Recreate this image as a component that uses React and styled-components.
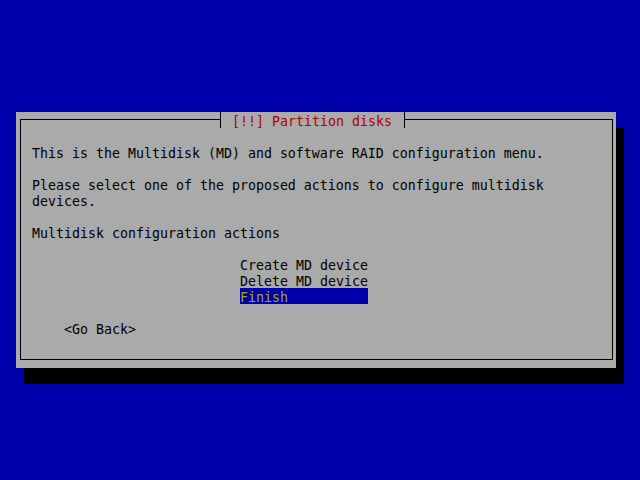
import React from "react";
import styled, { createGlobalStyle } from "styled-components";

const GlobalStyle = createGlobalStyle`
    html, body {
        margin: 0;
        padding: 0;
        background: #0000aa;
    }
`;

const menuItems = ["Create MD device", "Delete MD device", "Finish"];

const App = () => {
    const selected = 2;

    return (
        <Screen>
            <GlobalStyle />
            <Dialog>
                <Frame>
                    <Title>[!!] Partition disks</Title>
                    <Text>This is the Multidisk (MD) and software RAID configuration menu.</Text>
                    <Text>
                        Please select one of the proposed actions to configure multidisk
                        <br />
                        devices.
                    </Text>
                    <Text>Multidisk configuration actions</Text>
                    <Menu>
                        {menuItems.map((item, i) => (
                            <MenuItem key={item} $active={i === selected}>
                                {item}
                            </MenuItem>
                        ))}
                    </Menu>
                    <BackButton>&lt;Go Back&gt;</BackButton>
                </Frame>
            </Dialog>
        </Screen>
    );
};

export default App;

// every text cell is 8x16, glyphs sit 2px lower than css line boxes put them
const Screen = styled.div`
    width: 640px;
    height: 480px;
    box-sizing: border-box;
    padding: 112px 0 0 16px;
    background: #0000aa;
    font-family: "DejaVu Sans Mono", "Liberation Mono", monospace;
    font-size: 13.29px;
    line-height: 16px;
    color: #000;
`;

const Dialog = styled.div`
    width: 600px;
    height: 256px;
    box-sizing: border-box;
    padding: 7px 3px 8px 4px;
    background: #aaaaaa;
    box-shadow: 8px 16px 0 #000;
`;

const Frame = styled.div`
    position: relative;
    height: 100%;
    box-sizing: border-box;
    border: 1px solid #000;
    padding: 24px 0 0 11px;
`;

const Title = styled.div`
    position: absolute;
    top: -8px;
    left: 199px;
    height: 16px;
    box-sizing: border-box;
    padding: 2px 12px 0 11px;
    background: #aaaaaa;
    border-left: 1px solid #000;
    border-right: 1px solid #000;
    color: #aa0000;
    white-space: pre;
`;

const Text = styled.p`
    margin: 0 0 14px;
    padding-top: 2px;
    white-space: pre;
`;

const Menu = styled.div`
    display: flex;
    flex-direction: column;
    width: 128px;
    margin: 0 0 16px 208px;
`;

const MenuItem = styled.div`
    height: 16px;
    box-sizing: border-box;
    padding-top: 2px;
    white-space: pre;
    background: ${(p) => (p.$active ? "#0000aa" : "transparent")};
    color: ${(p) => (p.$active ? "#aaaa00" : "#000")};
`;

const BackButton = styled.div`
    margin-left: 32px;
    padding-top: 2px;
    white-space: pre;
`;
